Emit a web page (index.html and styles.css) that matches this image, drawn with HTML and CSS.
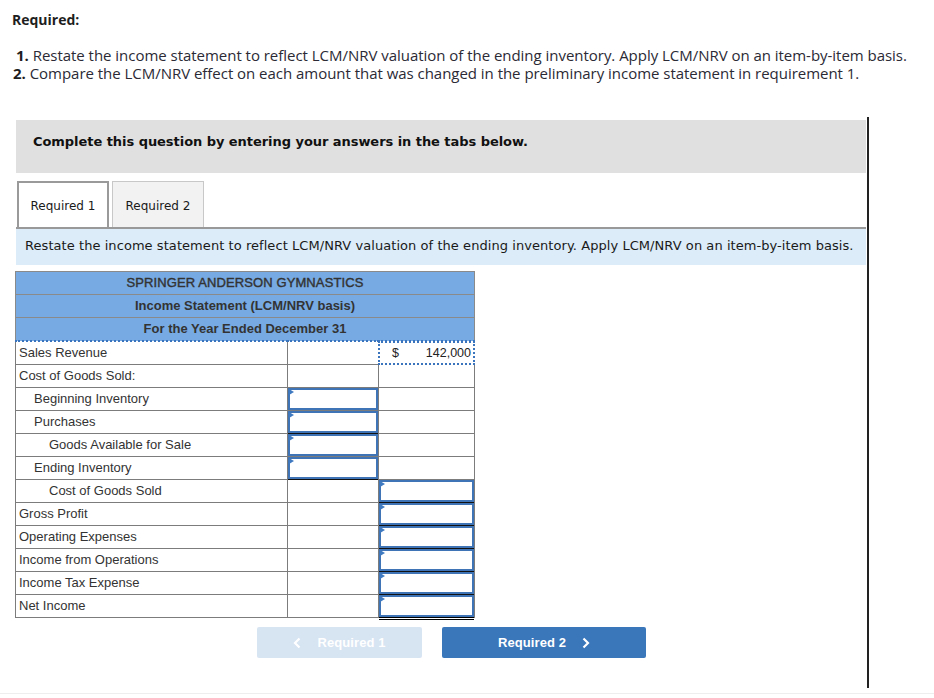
FILE: index.html
```html
<!DOCTYPE html>
<html>
<head>
<meta charset="utf-8">
<link rel="stylesheet" href="styles.css">
</head>
<body>
<div class="page">
  <p class="req-title">Required:</p>
  <ol class="req-list">
    <li><b>1.</b> Restate the income statement to reflect LCM/NRV valuation of the ending inventory. Apply LCM/NRV on an item-by-item basis.</li>
    <li class="second"><b>2.</b> Compare the LCM/NRV effect on each amount that was changed in the preliminary income statement in requirement 1.</li>
  </ol>

  <div class="question">
    <div class="banner">Complete this question by entering your answers in the tabs below.</div>

    <div class="tabs">
      <div class="tab active">Required 1</div>
      <div class="tab">Required 2</div>
    </div>

    <div class="instruction">Restate the income statement to reflect LCM/NRV valuation of the ending inventory. Apply LCM/NRV on an item-by-item basis.</div>

    <table class="stmt">
      <colgroup>
        <col class="c-label">
        <col class="c-mid">
        <col class="c-right">
      </colgroup>
      <tr class="head"><th colspan="3" class="company">SPRINGER ANDERSON GYMNASTICS</th></tr>
      <tr class="head"><th colspan="3">Income Statement (LCM/NRV basis)</th></tr>
      <tr class="head last"><th colspan="3">For the Year Ended December 31</th></tr>
      <tr>
        <td>Sales Revenue</td>
        <td></td>
        <td class="given"><div class="given-box"><span class="cur">$</span><span class="amt">142,000</span></div></td>
      </tr>
      <tr>
        <td>Cost of Goods Sold:</td>
        <td></td>
        <td></td>
      </tr>
      <tr>
        <td class="ind1">Beginning Inventory</td>
        <td class="inp"><div class="box"></div></td>
        <td></td>
      </tr>
      <tr>
        <td class="ind1">Purchases</td>
        <td class="inp"><div class="box uline"></div></td>
        <td></td>
      </tr>
      <tr>
        <td class="ind2">Goods Available for Sale</td>
        <td class="inp"><div class="box"></div></td>
        <td></td>
      </tr>
      <tr>
        <td class="ind1">Ending Inventory</td>
        <td class="inp"><div class="box uline"></div></td>
        <td></td>
      </tr>
      <tr>
        <td class="ind2">Cost of Goods Sold</td>
        <td></td>
        <td class="inp"><div class="box uline"></div></td>
      </tr>
      <tr>
        <td>Gross Profit</td>
        <td></td>
        <td class="inp"><div class="box uline"></div></td>
      </tr>
      <tr>
        <td>Operating Expenses</td>
        <td></td>
        <td class="inp"><div class="box uline"></div></td>
      </tr>
      <tr>
        <td>Income from Operations</td>
        <td></td>
        <td class="inp"><div class="box uline"></div></td>
      </tr>
      <tr>
        <td>Income Tax Expense</td>
        <td></td>
        <td class="inp"><div class="box uline"></div></td>
      </tr>
      <tr>
        <td>Net Income</td>
        <td></td>
        <td class="inp"><div class="box dline"></div></td>
      </tr>
    </table>

    <div class="nav">
      <button class="btn prev" type="button">
        <svg class="chev" width="8" height="12" viewBox="0 0 8 12"><path d="M6.5 1.5 L2 6 L6.5 10.5" fill="none" stroke="#fff" stroke-width="2.2"/></svg>
        <span>Required 1</span>
      </button>
      <button class="btn next" type="button">
        <span>Required 2</span>
        <svg class="chev" width="8" height="12" viewBox="0 0 8 12"><path d="M1.5 1.5 L6 6 L1.5 10.5" fill="none" stroke="#fff" stroke-width="2.2"/></svg>
      </button>
    </div>
  </div>
  <div class="footer-line"></div>
</div>
</body>
</html>
```

FILE: styles.css
```css
html, body {
  margin: 0;
  padding: 0;
  background: #fff;
}

.page {
  width: 934px;
  height: 698px;
  position: relative;
  overflow: hidden;
  font-family: "Open Sans", "Liberation Sans", sans-serif;
  color: #2b2a35;
}

.req-title {
  margin: 0;
  padding: 11px 0 0 12px;
  font-size: 14px;
  line-height: 18px;
  font-weight: 700;
  color: #1e1e1e;
}

.req-list {
  list-style: none;
  margin: 17px 0 0 0;
  padding: 0 0 0 16px;
  font-size: 15px;
  line-height: 18px;
  letter-spacing: -0.03px;
}

.req-list li.second {
  margin-left: -3px;
}

.req-list b {
  font-weight: 700;
  color: #1e1e1e;
}

.question {
  margin: 35px 0 0 16px;
  width: 851px;
  padding-top: 3px;
  height: 568px;
  border-right: 2px solid #222;
  box-sizing: content-box;
}

.banner {
  width: 850px;
  height: 53px;
  background: #e0e0e0;
  box-sizing: border-box;
  padding: 13px 0 0 17px;
  font-family: "DejaVu Sans", Verdana, sans-serif;
  font-weight: 700;
  font-size: 13px;
  line-height: 18px;
  color: #111;
  letter-spacing: -0.05px;
}

.tabs {
  display: flex;
  gap: 3px;
  margin-top: 8px;
  width: 850px;
  height: 48px;
  border-bottom: 2px solid #999;
  box-sizing: border-box;
  padding-left: 1px;
}

.tab {
  width: 92px;
  height: 46px;
  box-sizing: border-box;
  border: 1px solid #c8c8c8;
  border-bottom: none;
  background: #f2f2f2;
  font-family: "DejaVu Sans", Verdana, sans-serif;
  font-size: 12px;
  color: #1a1a1a;
  display: flex;
  align-items: center;
  justify-content: center;
  padding-top: 2px;
}

.tab.active {
  background: #fff;
  border: 2px solid #9a9a9a;
  border-bottom: none;
}

.instruction {
  width: 850px;
  height: 36px;
  background: #dcecf8;
  box-sizing: border-box;
  padding: 8px 0 0 9px;
  font-family: "DejaVu Sans", Verdana, sans-serif;
  font-size: 13px;
  line-height: 18px;
  letter-spacing: 0.06px;
  color: #1a1a1a;
}

.stmt {
  margin: 6px 0 0 -1px;
  width: 459px;
  border-collapse: collapse;
  table-layout: fixed;
  font-family: "Liberation Sans", Arial, sans-serif;
  font-size: 13px;
  color: #333;
}

.c-label { width: 272px; }
.c-mid { width: 91px; }
.c-right { width: 96px; }

.stmt th {
  height: 22px;
  padding: 0;
  background: #77aae3;
  border: 1px solid #8a8a8a;
  font-weight: 700;
  font-size: 13px;
  color: #333;
  text-align: center;
  line-height: 20px;
}

.stmt th.company {
  font-weight: 400;
  -webkit-text-stroke: 0.4px #333;
  letter-spacing: 0.1px;
}

.stmt tr.last th {
  border-bottom: 2px dotted #3a74bd;
}

.stmt td {
  height: 22px;
  padding: 0 0 0 3px;
  border: 1px solid #7c7c7c;
  line-height: 20px;
  white-space: nowrap;
}

.stmt td.ind1 { padding-left: 18px; }
.stmt td.ind2 { padding-left: 33px; }

.stmt td.given,
.stmt td.inp {
  padding: 0;
  position: relative;
}

.given-box {
  position: absolute;
  left: -1px;
  right: -1px;
  top: -1px;
  bottom: -1px;
  border: 2px dotted #3a74bd;
  background: #fff;
  padding: 0 2px 0 12px;
  display: flex;
  align-items: center;
  justify-content: space-between;
  color: #222;
  font-size: 12.5px;
}

.box {
  position: absolute;
  left: 0;
  right: 0;
  top: 0;
  bottom: 0;
  border: 2px solid #3f74b6;
  background: #fff;
}

.box::before {
  content: "";
  position: absolute;
  left: -1px;
  top: -1px;
  border-left: 5px solid #3f7ac0;
  border-top: 3px solid transparent;
  border-bottom: 3px solid transparent;
}

.box.uline::after {
  content: "";
  position: absolute;
  left: -2px;
  right: -2px;
  bottom: -3px;
  height: 1.5px;
  background: #111;
}

.box.dline::after {
  content: "";
  position: absolute;
  left: -2px;
  right: -2px;
  bottom: -5px;
  height: 1px;
  border-top: 1px solid #000;
  border-bottom: 1px solid #000;
}

.nav {
  display: flex;
  gap: 20px;
  margin: 9px 0 0 241px;
}

.btn {
  height: 31px;
  border: none;
  border-radius: 2px;
  display: flex;
  align-items: center;
  justify-content: center;
  gap: 16px;
  font-family: "Liberation Sans", Arial, sans-serif;
  font-weight: 700;
  font-size: 13px;
  letter-spacing: 0.1px;
  color: #fff;
  padding: 0;
}

.btn.prev {
  width: 165px;
  background: #d7e4f2;
}

.btn.next {
  width: 204px;
  background: #3a76ba;
}

.chev { display: block; }

.footer-line {
  position: absolute;
  left: 0;
  right: 0;
  top: 693px;
  height: 1px;
  background: #eee;
}
```
